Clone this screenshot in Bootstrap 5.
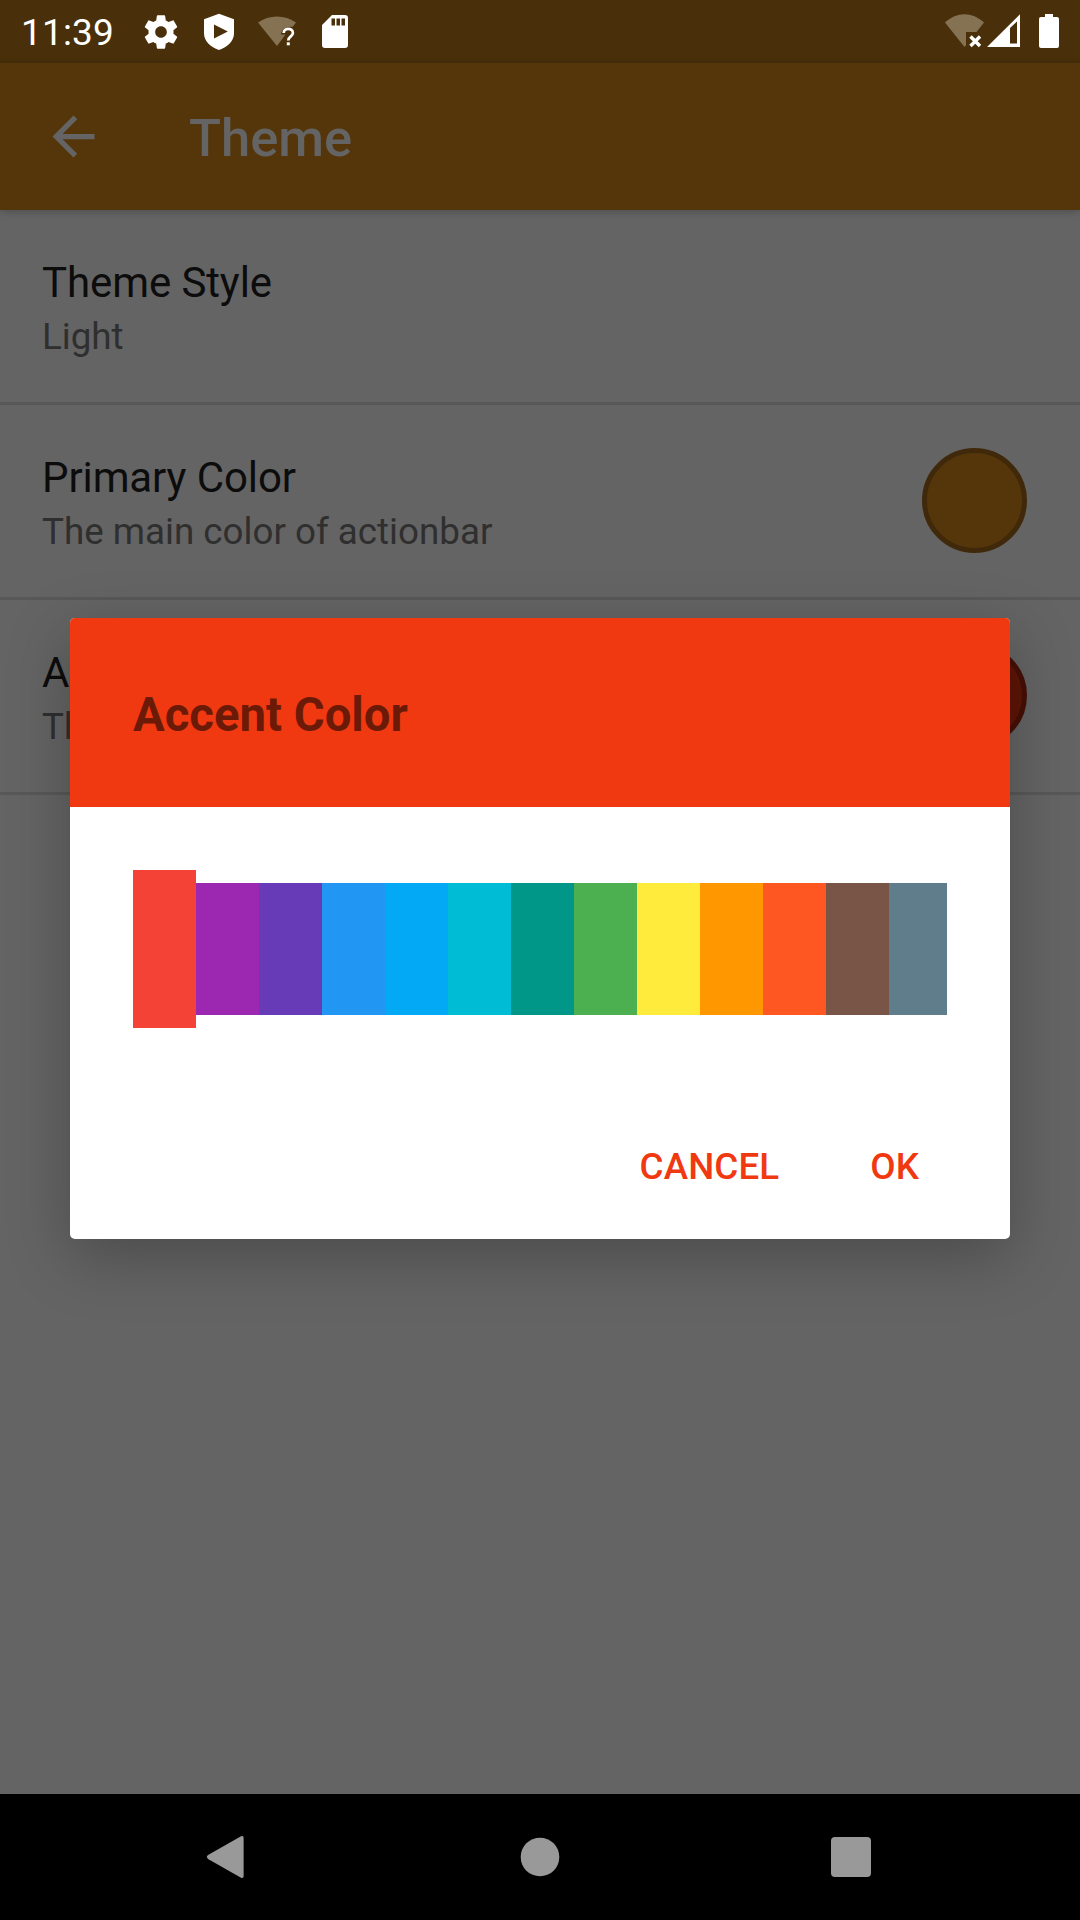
<!DOCTYPE html>
<html lang="en">
<head>
<meta charset="utf-8">
<meta name="viewport" content="width=device-width, initial-scale=1">
<title>Theme</title>
<link href="https://cdn.jsdelivr.net/npm/bootstrap@5.3.0/dist/css/bootstrap.min.css" rel="stylesheet">
<style>
body{font-family:Roboto,"Noto Sans",sans-serif;background:#000;overflow:hidden}
svg{display:block;flex:none}
.screen{width:1080px;height:1920px;background:#646464}
.status{height:63px;background:#49300a;color:#fff}
.clock{font-size:37px;line-height:42px;letter-spacing:.15px;width:141px;padding:2px 0 0 21px}
.toolbar{height:147px;background:#55360b;color:#646464;padding-left:42px;box-shadow:0 1px 8px rgba(0,0,0,.25);z-index:1}
.toolbar h1{font-size:52.5px;font-weight:500;line-height:60px;margin:3px 0 0 84px}
.pref{height:195px;border-bottom:3px solid #585858;padding:0 53px 0 42px}
.pref-text{padding-top:4px}
.pref-title{font-size:42px;line-height:50px;letter-spacing:-.1px;color:#0c0c0c}
.pref-sub{font-size:36.75px;line-height:44px;margin-top:7px;color:#2f2f2f}
.dot{width:105px;height:105px;border:5px solid;margin-bottom:1px}
.dot-p{background:#55360b;border-color:#40290a}
.dot-a{background:#5e1506;border-color:#460f05}
.scrim{top:63px;bottom:126px;z-index:2}
.dialog-box{width:940px;height:621px;border-radius:5px;box-shadow:0 18px 62px rgba(0,0,0,.25)}
.dialog-head{height:189px;background:#f03910;color:#6c1a08;padding:5px 63px 0}
.dialog-head h2{font-size:47.25px;font-weight:700;line-height:56px}
.swatches{height:158px;margin:63px 63px 0}
.swatches div{width:63px;height:132px;flex:none}
.swatches .picked{height:158px}
.swatches div:last-child{width:58px}
.actions{padding:114px 69px 0;gap:47px}
.actions .btn{font-size:36.75px;font-weight:500;line-height:50px;letter-spacing:.1px;color:#f03910;border:0;padding:0 22px;border-radius:0}
.navkeys{height:126px;background:#000}
</style>
</head>
<body>
<div class="screen position-relative d-flex flex-column overflow-hidden">
  <div class="status d-flex align-items-center">
    <span class="clock">11:39</span>
    <svg width="40" height="40" viewBox="0 0 24 24" fill="#fff"><path d="M19.43 12.98c.04-.32.07-.64.07-.98s-.03-.66-.07-.98l2.11-1.65c.19-.15.24-.42.12-.64l-2-3.46c-.12-.22-.39-.3-.61-.22l-2.49 1c-.52-.4-1.08-.73-1.69-.98l-.38-2.65C14.46 2.18 14.25 2 14 2h-4c-.25 0-.46.18-.49.42l-.38 2.65c-.61.25-1.17.59-1.69.98l-2.49-1c-.23-.09-.49 0-.61.22l-2 3.46c-.13.22-.07.49.12.64l2.11 1.65c-.04.32-.07.65-.07.98s.03.66.07.98l-2.11 1.65c-.19.15-.24.42-.12.64l2 3.46c.12.22.39.3.61.22l2.49-1c.52.4 1.08.73 1.69.98l.38 2.65c.03.24.24.42.49.42h4c.25 0 .46-.18.49-.42l.38-2.65c.61-.25 1.17-.59 1.69-.98l2.49 1c.23.09.49 0 .61-.22l2-3.46c.12-.22.07-.49-.12-.64l-2.11-1.65zM12 15.500c-1.93 0-3.500-1.570-3.500-3.500s1.570-3.500 3.500-3.500 3.500 1.570 3.500 3.500-1.570 3.500-3.500 3.500z"/></svg>
    <svg width="76" height="63" viewBox="181 0 76 63"><path fill="#fff" fill-rule="evenodd" d="M219 13.700l15 5.600v14c0 8-6.500 14-15 16.700c-8.500-2.700-15-8.700-15-16.700v-14zM214 24.500v14l13.800-7z"/></svg>
    <svg width="64" height="63" viewBox="257 0 64 63"><path fill="#847253" d="M258 22.500C269 14.500 285 14.500 296 22.500L292.500 27C286 26 281.500 29 281 34.500H285.500L277 46z"/><path fill="none" stroke="#fff" stroke-width="2.700" d="M283.700 33c0-5.500 9.200-5.500 9.200 0c0 3.400-4.600 3.500-4.600 7.600"/><rect x="286.800" y="42.300" width="3" height="3" fill="#fff"/></svg>
    <svg width="30" height="63" viewBox="321 0 30 63"><path fill="#fff" fill-rule="evenodd" d="M332 15h13a3 3 0 0 1 3 3v27a3 3 0 0 1-3 3h-20a3 3 0 0 1-3-3v-20zM331.500 18.500v7h3.500v-7zm5 0v7h3.500v-7zm5 0v7h3.500v-7z"/></svg>
    <svg class="ms-auto" width="136" height="63" viewBox="944 0 136 63"><path fill="#847253" d="M945 22.500C957 11.500 972 11.500 984 22.500L976.500 32H966V45L964.500 47z"/><path stroke="#fff" stroke-width="3.400" d="M970.500 36.500l9.500 9.500m0-9.500l-9.500 9.500"/><path fill="#fff" fill-rule="evenodd" d="M1020 14.300V47H987zM1010 28v15.500h7V21.500z"/><path fill="#fff" d="M1045 14h8v3h4a2 2 0 0 1 2 2v27a2 2 0 0 1-2 2h-16a2 2 0 0 1-2-2v-27a2 2 0 0 1 2-2h4z"/></svg>
  </div>

  <header class="toolbar position-relative d-flex align-items-center">
    <svg width="63" height="63" viewBox="0 0 24 24" fill="#646464"><path d="M20 11H7.830l5.590-5.590L12 4l-8 8 8 8 1.410-1.410L7.830 13H20z"/></svg>
    <h1>Theme</h1>
  </header>

  <main class="flex-grow-1">
    <div class="pref d-flex align-items-center justify-content-between">
      <div class="pref-text"><div class="pref-title">Theme Style</div><div class="pref-sub">Light</div></div>
    </div>
    <div class="pref d-flex align-items-center justify-content-between">
      <div class="pref-text"><div class="pref-title">Primary Color</div><div class="pref-sub">The main color of actionbar</div></div>
      <div class="dot dot-p rounded-circle"></div>
    </div>
    <div class="pref d-flex align-items-center justify-content-between">
      <div class="pref-text"><div class="pref-title">A</div><div class="pref-sub">Th</div></div>
      <div class="dot dot-a rounded-circle"></div>
    </div>
  </main>

  <nav class="navkeys">
    <svg width="1080" height="126" viewBox="0 1794 1080 126" fill="#999"><path d="M241 1836.300q2.600-1.200 2.600 1.700v38q0 2.900-2.600 1.700l-32.500-18.500q-3.400-2.200 0-4.400z"/><circle cx="540" cy="1857" r="19.300"/><rect x="831" y="1837" width="40" height="40" rx="4"/></svg>
  </nav>

  <div class="scrim position-absolute start-0 end-0 d-flex align-items-center justify-content-center">
    <div class="dialog-box bg-white overflow-hidden" role="dialog">
      <div class="dialog-head d-flex align-items-center"><h2 class="m-0">Accent Color</h2></div>
      <div class="swatches d-flex align-items-center">
        <div class="picked" style="background:#f44336"></div>
        <div style="background:#9c27b0"></div>
        <div style="background:#673ab7"></div>
        <div style="background:#2196f3"></div>
        <div style="background:#03a9f4"></div>
        <div style="background:#00bcd4"></div>
        <div style="background:#009688"></div>
        <div style="background:#4caf50"></div>
        <div style="background:#ffeb3b"></div>
        <div style="background:#ff9800"></div>
        <div style="background:#ff5722"></div>
        <div style="background:#795548"></div>
        <div style="background:#607d8b"></div>
      </div>
      <div class="actions d-flex justify-content-end">
        <button class="btn">CANCEL</button>
        <button class="btn">OK</button>
      </div>
    </div>
  </div>
</div>
<script src="https://cdn.jsdelivr.net/npm/bootstrap@5.3.0/dist/js/bootstrap.bundle.min.js"></script>
</body>
</html>
